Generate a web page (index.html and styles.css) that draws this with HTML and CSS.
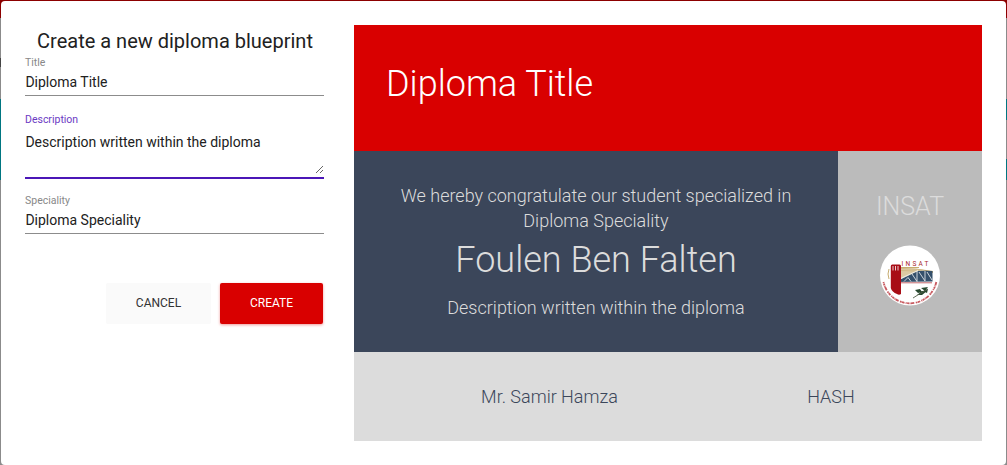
FILE: index.html
```html
<!DOCTYPE html>
<html lang="en">
<head>
<meta charset="utf-8">
<title>Create a new diploma blueprint</title>
<link rel="stylesheet" href="styles.css">
</head>
<body>
<div class="page">
  <main class="dialog">
    <form class="form">
      <h1 class="heading">Create a new diploma blueprint</h1>
      <div class="field"><label class="label" for="t">Title</label><input class="input" id="t" value="Diploma Title"></div>
      <div class="field field-area"><label class="label label-active" for="d">Description</label><textarea class="input area" id="d">Description written within the diploma</textarea></div>
      <div class="field"><label class="label" for="s">Speciality</label><input class="input" id="s" value="Diploma Speciality"></div>
      <div class="actions">
        <button class="button cancel" type="button">CANCEL</button>
        <button class="button create" type="button">CREATE</button>
      </div>
    </form>
    <section class="diploma">
      <header class="diploma-title">Diploma Title</header>
      <div class="diploma-body">
        <div class="message">
          <p class="copy">We hereby congratulate our student specialized in Diploma Speciality</p>
          <p class="student">Foulen Ben Falten</p>
          <p class="copy">Description written within the diploma</p>
        </div>
        <aside class="school">
          <p class="school-name">INSAT</p>
          <svg class="logo" viewBox="0 0 60 60">
            <circle cx="30" cy="29.5" r="30" fill="#fff"/>
            <path d="M20 21.5h19M9 23q-2 5 0 10M20 22.5q18 0 33 3M20 24.5q18 0 33 2" fill="none" stroke="#c6ac70" stroke-width="1"/>
            <path d="M20 22q18 0 24 2L20 33z" fill="#d3bd8c" opacity=".8"/>
            <path d="M15 36L38 25q8-.5 14.500 0V35.500z" fill="#34506b"/>
            <path d="M14 35.500l24-11M24 35.500l4-4 3 4M32 28l5 7.500V25M39 26l6 9V25M47 26l5 8" fill="none" stroke="#f4f6f8" stroke-width=".8"/>
            <path d="M20 36.800h32" stroke="#a9272b" stroke-width=".7"/>
            <path d="M10.800 20q0-1.500 1.500-1.500h7.200Q21 18.500 21 20V48q-2 1.500-4 0-5-2-6.200-6z" fill="#a80d16"/>
            <path d="M13 20v4.500M15.500 20v4.500M18 20v4.500" stroke="#fff" stroke-width=".8"/>
            <text class="logo-text" x="21.500" y="20.300" textLength="27">INSAT</text>
            <path d="M35 44l5-1 2 3-4 1zM41 42l7-1-3 4zM37 49l5-4 5 0-5 4zM43 45l5-2-1 4z" fill="#28482f"/>
            <path d="M33 52l8-5 7-4" fill="none" stroke="#52604b" stroke-width=".9"/>
            <path d="M3.500 36A27 27 0 0 0 56.300 36" fill="none" stroke="#c85a60" stroke-width="1.800" stroke-dasharray="1 .5 2.100 .5 .8 .4 3.500 1.500 1.700 .4 2.500 1.200"/>
          </svg>
        </aside>
      </div>
      <footer class="signatures"><span class="signer">Mr. Samir Hamza</span><span class="hash">HASH</span></footer>
    </section>
  </main>
</div>
</body>
</html>
```
FILE: styles.css
```css
* { box-sizing: border-box; }
body { margin: 0; font-family: Roboto, sans-serif; }
p { margin: 0; }
.page {
  width: 1007px; height: 465px; padding: 1px 1px 0; overflow: hidden;
  background:
    linear-gradient(#8c0000, #8c0000) 0 0 / 100% 18px no-repeat,
    linear-gradient(#444, #444) 0 58px / 1px 9px no-repeat,
    linear-gradient(#007681, #007681) 0 99px / 1px 81px no-repeat,
    linear-gradient(#007681 21px, #8b8b8b 21px 60px, #007681 60px) 100% 99px / 1px 81px no-repeat,
    #8b8b8b;
}
.dialog { height: 464px; padding: 24px; display: flex; gap: 30px; background: #fff; border-radius: 4px; }
.form { width: 299px; }
.heading { margin: 0; height: 32px; padding-left: 1px; font-size: 20px; line-height: 32px; font-weight: 400; text-align: center; color: #212121; }
.field { height: 39px; display: flex; flex-direction: column; }
.label { height: 14px; font-size: 10.5px; line-height: 12px; color: #888; }
.label-active { color: #6b3ac3; }
.input { display: block; width: 100%; height: 25px; margin: 0; padding: 0 0 2px .4px; border: 0; border-bottom: 1px solid #8c8c8c; outline: 0; background: transparent; color: #212121; font: 400 14px/20px Roboto, sans-serif; }
.field-area { height: 65px; margin: 18px 0 16px; border-bottom: 2px solid #4b16b7; }
.field-area .area { height: 46px; padding: 4px 0 0 .4px; border: 0; resize: vertical; overflow: hidden; }
.actions { margin-top: 49px; padding-right: 1px; display: flex; justify-content: flex-end; gap: 9px; }
.button { width: 105px; height: 41px; padding: 0; border: 0; border-radius: 2px; font: 400 12px/39px Roboto, sans-serif; }
.cancel { background: #fafafa; color: #333; }
.create { width: 103px; background: #d90000; color: #fff; box-shadow: 0 1px 3px #d9000066; }
.diploma { width: 628px; height: 416px; }
.diploma-title { height: 126px; padding: 38px 32px; background: #d90000; color: #fff; font-size: 36px; line-height: 42px; font-weight: 300; }
.diploma-body { height: 201px; display: flex; }
.message { width: 484px; padding: 32px; background: #3b465a; color: #dcdcdc; text-align: center; font-weight: 300; }
.copy { font-size: 18px; line-height: 25px; }
.student { height: 62px; font-size: 36px; line-height: 55px; }
.school { flex: 1; padding-top: 38px; background: #bbb; color: #dcdcdc; text-align: center; font-weight: 300; }
.school-name { font-size: 25px; line-height: 36px; }
.logo { display: block; width: 60px; height: 60px; margin: 21px auto 0; overflow: visible; }
.logo-text { fill: #a9272b; font: 400 6.5px Roboto, sans-serif; }
.signatures { height: 89px; display: flex; background: #dcdcdc; color: #3b465a; text-align: center; font-size: 18px; line-height: 89px; font-weight: 300; }
.signer { width: 391px; }
.hash { width: 172px; }
```
